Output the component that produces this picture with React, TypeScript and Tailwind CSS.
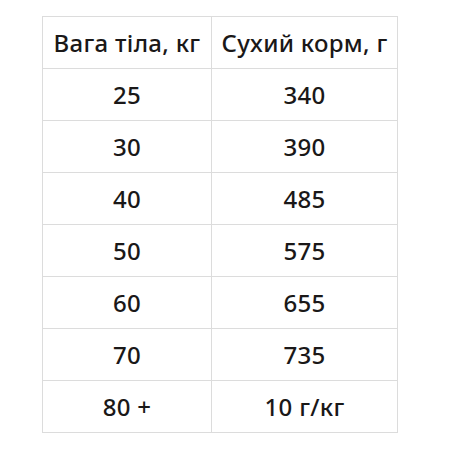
import React from 'react';

const rows: [string, string][] = [
  ['25', '340'],
  ['30', '390'],
  ['40', '485'],
  ['50', '575'],
  ['60', '655'],
  ['70', '735'],
  ['80 +', '10 г/кг'],
];

export default function App() {
  return (
    <div className="w-[450px] h-[450px] bg-white pt-[16px] pl-[42px]">
      <table
        className="border-collapse text-[24px] font-medium text-[#1a1818] tracking-[0.3px]"
        style={{ fontFamily: '"Noto Sans", "Open Sans", sans-serif' }}
      >
        <thead>
          <tr className="h-[52px]">
            <th className="w-[169px] border border-[#dcdcdc] font-medium text-center p-0">Вага тіла, кг</th>
            <th className="w-[186px] border border-[#dcdcdc] font-medium text-center p-0">Сухий корм, г</th>
          </tr>
        </thead>
        <tbody>
          {rows.map(([w, f]) => (
            <tr key={w} className="h-[52px]">
              <td className="border border-[#dcdcdc] text-center p-0">{w}</td>
              <td className="border border-[#dcdcdc] text-center p-0">{f}</td>
            </tr>
          ))}
        </tbody>
      </table>
    </div>
  );
}
